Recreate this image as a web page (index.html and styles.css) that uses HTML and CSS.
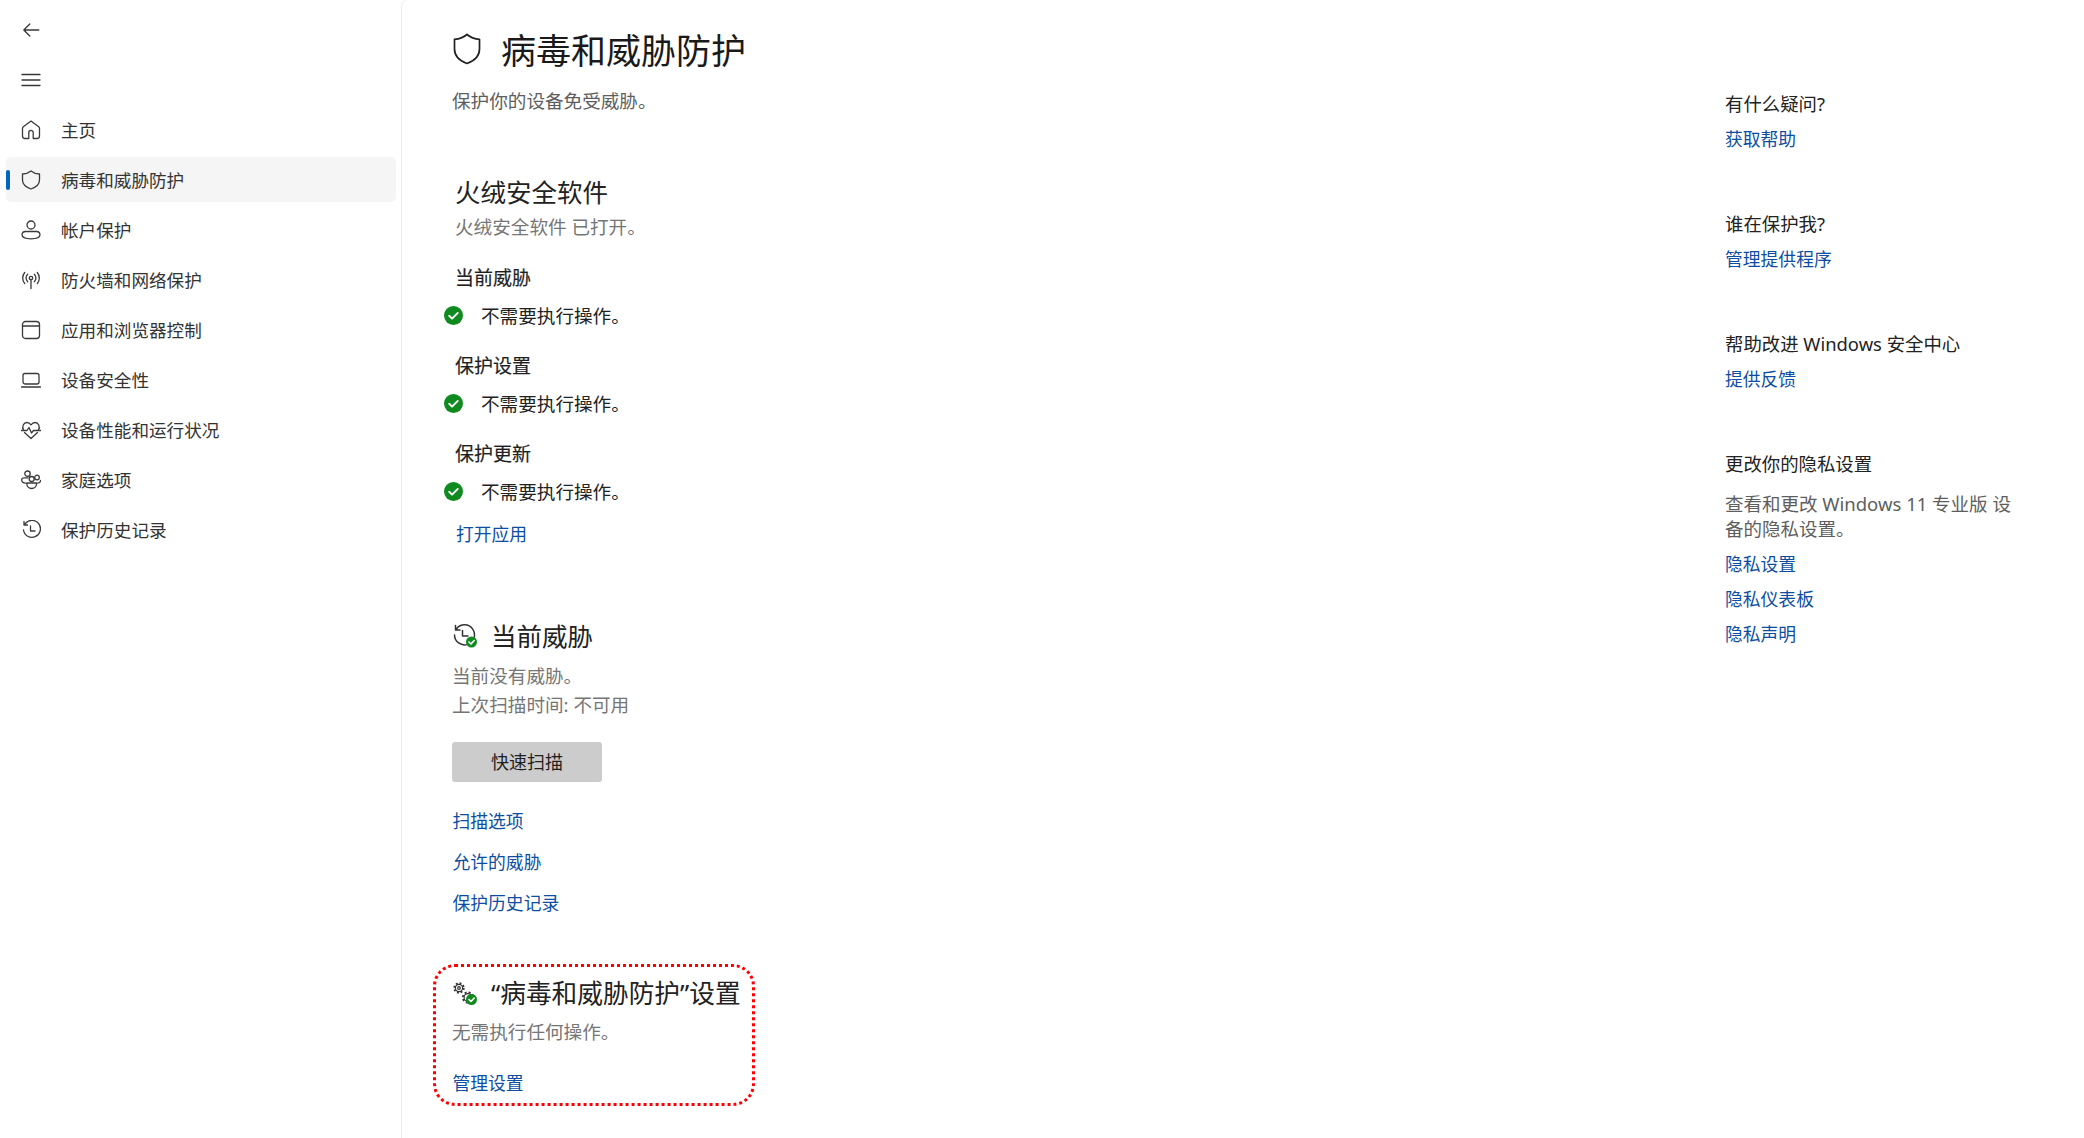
FILE: index.html
```html
<!DOCTYPE html>
<html lang="zh-CN">
<head>
<meta charset="utf-8">
<title>病毒和威胁防护</title>
<link rel="stylesheet" href="styles.css">
</head>
<body>
<div class="app">
  <aside class="side">
    <div class="nav-item"><svg class="nav-icon" viewBox="0 0 20 20"><path d="M17.800 10H2.800M2.800 10l6-6M2.800 10l6 6"/></svg></div>
    <div class="nav-item"><svg class="nav-icon" viewBox="0 0 20 20"><path d="M1 4.500h18M1 10h18M1 15.500h18"/></svg></div>
    <div class="nav-item"><svg class="nav-icon" viewBox="0 0 20 20"><path d="M7.800 18.500v-6a2.200 2.200 0 0 1 4.400 0v6h3.800a2.500 2.500 0 0 0 2.500-2.500V8.600a2.500 2.500 0 0 0-.8-1.800L11.300 1.900a1.900 1.900 0 0 0-2.600 0L2.300 6.800a2.500 2.500 0 0 0-.8 1.800V16A2.500 2.500 0 0 0 4 18.500z"/></svg><span>主页</span></div>
    <div class="nav-item active"><svg class="nav-icon" viewBox="0 0 20 20"><path d="M10 1C7.600 3 4.900 3.900 1.500 4V10c0 4 2.900 7 8.500 9 5.600-2 8.500-5 8.500-9V4C15.100 3.900 12.400 3 10 1z"/></svg><span>病毒和威胁防护</span></div>
    <div class="nav-item"><svg class="nav-icon" viewBox="0 0 20 20"><circle cx="10" cy="5" r="4"/><path d="M4.500 11.500h11a3.500 3.500 0 0 1 3.500 3.300c0 2.600-4 4-9 4s-9-1.400-9-4a3.500 3.500 0 0 1 3.500-3.300z"/></svg><span>帐户保护</span></div>
    <div class="nav-item"><svg class="nav-icon" viewBox="0 0 20 20"><circle cx="10" cy="8" r="1.700"/><path d="M10 9.700V18.500M6.700 4.300a5 5 0 0 0 0 7.400M13.300 4.300a5 5 0 0 1 0 7.400M3.700 2.500a8.500 8.500 0 0 0 0 11M16.300 2.500a8.500 8.500 0 0 1 0 11"/></svg><span>防火墙和网络保护</span></div>
    <div class="nav-item"><svg class="nav-icon" viewBox="0 0 20 20"><rect x="1.500" y="1.500" width="17" height="17" rx="3"/><path d="M1.500 6h17"/></svg><span>应用和浏览器控制</span></div>
    <div class="nav-item"><svg class="nav-icon" viewBox="0 0 20 20"><rect x="2" y="3.500" width="16" height="10.500" rx="2"/><path d="M.5 17h19"/></svg><span>设备安全性</span></div>
    <div class="nav-item"><svg class="nav-icon" viewBox="0 0 20 20"><path d="M2.500 10C.6 6.500 2.500 2.500 6 2.500c1.800 0 3 1 4 2.300 1-1.300 2.200-2.300 4-2.300 3.500 0 5.400 4 3.500 7.500M3.500 12.500 10 18.500l6.500-6"/><path d="M.5 10.500H6l2-3 2.500 5.500 2-2.500h7"/></svg><span>设备性能和运行状况</span></div>
    <div class="nav-item"><svg class="nav-icon" viewBox="0 0 20 20"><circle cx="6.500" cy="3.700" r="2.700"/><circle cx="16" cy="7.500" r="2.300"/><circle cx="10.700" cy="9" r="2.500"/><path d="M6.300 13h8.800c.3 0 .5.200.5.500 0 2.800-2.200 5-5 5s-4.800-2.200-4.800-5c0-.3.200-.5.500-.5zM7 7.800H3c-1.300 0-2.300 1-2.300 2 0 2 1.800 3.400 4 3.400M15.600 13.200c2.200 0 3.900-1.200 3.900-2.700"/></svg><span>家庭选项</span></div>
    <div class="nav-item"><svg class="nav-icon" viewBox="0 0 20 20"><path d="M2.500 10a8.500 8.500 0 1 0 1.800-6.500M3 1.500v3.500h3.500M9.500 6v5H14"/></svg><span>保护历史记录</span></div>
  </aside>
  <main class="panel">
    <div class="content">
      <header class="page-head">
        <svg class="page-icon" viewBox="0 0 28 32"><path d="M14 1.500C10.500 4.500 6.500 6 1.500 6.300V16c0 6.500 4.200 11.500 12.500 14.500C22.300 27.500 26.500 22.500 26.500 16V6.300C21.500 6 17.500 4.500 14 1.500z"/></svg>
        <h1 class="page-title">病毒和威胁防护</h1>
      </header>
      <p class="lede">保护你的设备免受威胁。</p>

      <section class="av">
        <h2 class="sec-title">火绒安全软件</h2>
        <p class="muted av-note">火绒安全软件 已打开。</p>
        <h3 class="sub first">当前威胁</h3>
        <div class="status"><svg class="check" viewBox="0 0 20 20"><circle cx="10" cy="10" r="10"/><path d="M5.500 10.300l3 3 6-6"/></svg><span>不需要执行操作。</span></div>
        <h3 class="sub">保护设置</h3>
        <div class="status"><svg class="check" viewBox="0 0 20 20"><circle cx="10" cy="10" r="10"/><path d="M5.500 10.300l3 3 6-6"/></svg><span>不需要执行操作。</span></div>
        <h3 class="sub">保护更新</h3>
        <div class="status"><svg class="check" viewBox="0 0 20 20"><circle cx="10" cy="10" r="10"/><path d="M5.500 10.300l3 3 6-6"/></svg><span>不需要执行操作。</span></div>
        <a class="link open-app">打开应用</a>
      </section>

      <section class="threats">
        <div class="sec-head">
          <svg class="sec-icon" viewBox="0 0 24 24"><path d="M1.500 11A10 10 0 1 0 3.600 4.700M2.500 1.500V6H7M9.500 6.500V12H15" class="ink"/><circle class="badge" cx="18.500" cy="18" r="5.500"/><path class="tick" d="M16 18l2 2 3.200-3.500"/></svg>
          <h2 class="sec-title">当前威胁</h2>
        </div>
        <p class="muted threat-note">当前没有威胁。<br>上次扫描时间: 不可用</p>
        <button class="scan">快速扫描</button>
        <a class="link first-link">扫描选项</a>
        <a class="link next-link">允许的威胁</a>
        <a class="link next-link">保护历史记录</a>
      </section>

      <section class="settings">
        <div class="sec-head">
          <svg class="sec-icon" viewBox="0 0 24 24"><g class="ink thin"><circle cx="6" cy="6" r="1.300"/><circle cx="6" cy="6" r="3.600"/><circle class="teeth" cx="6" cy="6" r="4.800"/><circle cx="15" cy="15.500" r="3.900"/><circle class="teeth big" cx="15" cy="15.500" r="5.200"/></g><circle class="badge" cx="18.500" cy="17.500" r="5.500"/><path class="tick" d="M16 17.500l2 2 3.200-3.500"/></svg>
          <h2 class="sec-title wide">“病毒和威胁防护”设置</h2>
        </div>
        <p class="muted settings-note">无需执行任何操作。</p>
        <a class="link manage">管理设置</a>
      </section>
    </div>

    <aside class="help">
      <h4 class="help-title">有什么疑问?</h4>
      <a class="link help-link">获取帮助</a>
      <h4 class="help-title gap">谁在保护我?</h4>
      <a class="link help-link">管理提供程序</a>
      <h4 class="help-title gap">帮助改进 Windows 安全中心</h4>
      <a class="link help-link">提供反馈</a>
      <h4 class="help-title gap">更改你的隐私设置</h4>
      <p class="help-text">查看和更改 Windows 11 专业版 设备的隐私设置。</p>
      <a class="link privacy-link">隐私设置</a>
      <a class="link privacy-link">隐私仪表板</a>
      <a class="link privacy-link">隐私声明</a>
    </aside>
  </main>
</div>
</body>
</html>
```
FILE: styles.css
```css
* { box-sizing: border-box; }
html, body { margin: 0; height: 100%; }
body {
  background: #fff;
  color: #1f1f1f;
  font: 18.600px/24px "Noto Sans", "Noto Sans CJK SC", sans-serif;
  overflow: hidden;
}
h1, h2, h3, h4, p { margin: 0; font-weight: 400; }
.app { display: flex; height: 1138px; }

.side { width: 401px; flex: none; padding: 7px 5px 0 6px; }
.nav-item {
  position: relative;
  display: flex;
  align-items: center;
  gap: 20px;
  height: 45px;
  margin-bottom: 5px;
  padding-left: 15px;
  font-size: 17.600px;
  color: #333;
  border-radius: 5px;
}
.nav-item.active { background: #f5f5f5; }
.nav-item.active::before {
  content: "";
  position: absolute;
  left: 0;
  top: 13px;
  width: 4px;
  height: 20px;
  border-radius: 2px;
  background: #0067c0;
}
.nav-icon {
  width: 20px;
  height: 20px;
  flex: none;
  fill: none;
  stroke: #3a3a3a;
  stroke-width: 1.300;
  stroke-linecap: round;
  stroke-linejoin: round;
}

.panel {
  flex: 1;
  display: flex;
  padding-top: 26px;
  border-left: 1px solid #ececec;
  border-top: 1px solid #f4f4f4;
  border-top-left-radius: 8px;
  margin-top: -1px;
}
.content { flex: 1; padding-left: 50px; }
.page-head { display: flex; align-items: center; gap: 20px; height: 48px; }
.page-icon {
  width: 28px;
  height: 32px;
  margin-left: 1px;
  margin-top: -2px;
  fill: none;
  stroke: #222;
  stroke-width: 1.700;
  stroke-linejoin: round;
}
.page-title { font-size: 35px; line-height: 48px; color: #1a1a1a; position: relative; top: 1px; }
.lede { margin-top: 15px; color: #5e5e5e; }

.av { margin-top: 61px; padding-left: 3px; }
.sec-title { font-size: 25.500px; line-height: 36px; color: #222; white-space: nowrap; }
.sec-title.wide { font-size: 25.700px; }
.muted { color: #767676; }
.av-note { margin-top: 5px; }
.sub { margin-top: 26.500px; font-size: 19px; color: #1f1f1f; font-weight: 400; -webkit-text-stroke: .2px #1f1f1f; }
.sub.first { margin-top: 27px; }
.status { display: flex; align-items: center; gap: 18px; margin: 13.500px 0 0 -11px; color: #222; }
.check { width: 19px; height: 19px; flex: none; }
.check circle { fill: #0e8a1f; }
.check path { fill: none; stroke: #fff; stroke-width: 2; stroke-linecap: round; stroke-linejoin: round; }
.link { display: block; color: #0d4ea3; width: fit-content; font-size: 17.800px; }
.open-app { margin: 18px 0 0 1px; }

.threats { margin-top: 72px; }
.sec-head { display: flex; align-items: center; gap: 14px; }
.sec-icon { width: 24px; height: 24px; margin-left: 1px; flex: none; overflow: visible; }
.ink { fill: none; stroke: #333; stroke-width: 1.500; stroke-linecap: round; stroke-linejoin: round; }
.ink.thin { stroke-width: 1.200; }
.teeth { stroke-width: 1.800; stroke-dasharray: 1.900 1.870; stroke-linecap: butt; }
.teeth.big { stroke-dasharray: 2.050 2.030; }
.badge { fill: #0e8a1f; }
.tick { fill: none; stroke: #fff; stroke-width: 1.600; stroke-linecap: round; stroke-linejoin: round; }
.threat-note { margin-top: 7px; line-height: 29.500px; }
.scan {
  display: block;
  width: 150px;
  height: 40px;
  margin: 22px 0 0 0;
  border: 0;
  border-radius: 3px;
  background: #ccc;
  color: #1f1f1f;
  font: inherit;
  font-size: 18px;
}
.first-link { margin: 27px 0 0 .5px; }
.next-link { margin: 17px 0 0 .5px; }

.settings {
  width: 322px;
  height: 142px;
  margin: 49px 0 0 -19px;
  padding: 9.500px 0 0 16px;
  border: 3px dotted #f00;
  border-radius: 22px;
}
.settings-note { margin-top: 8px; }
.manage { margin: 26.500px 0 0 .5px; }

.help { width: 359px; flex: none; padding: 66px 64px 0 0; }
.help-title { color: #222; white-space: nowrap; font-size: 18.400px; }
.help-title.gap { margin-top: 61px; }
.help-link { margin: 11px 0 0 0; }
.help-text { margin-top: 14.500px; line-height: 25px; color: #5e5e5e; font-size: 18.500px; }
.privacy-link { margin: 11px 0 0 0; }
.help-text + .privacy-link { margin-top: 11.500px; }
```
